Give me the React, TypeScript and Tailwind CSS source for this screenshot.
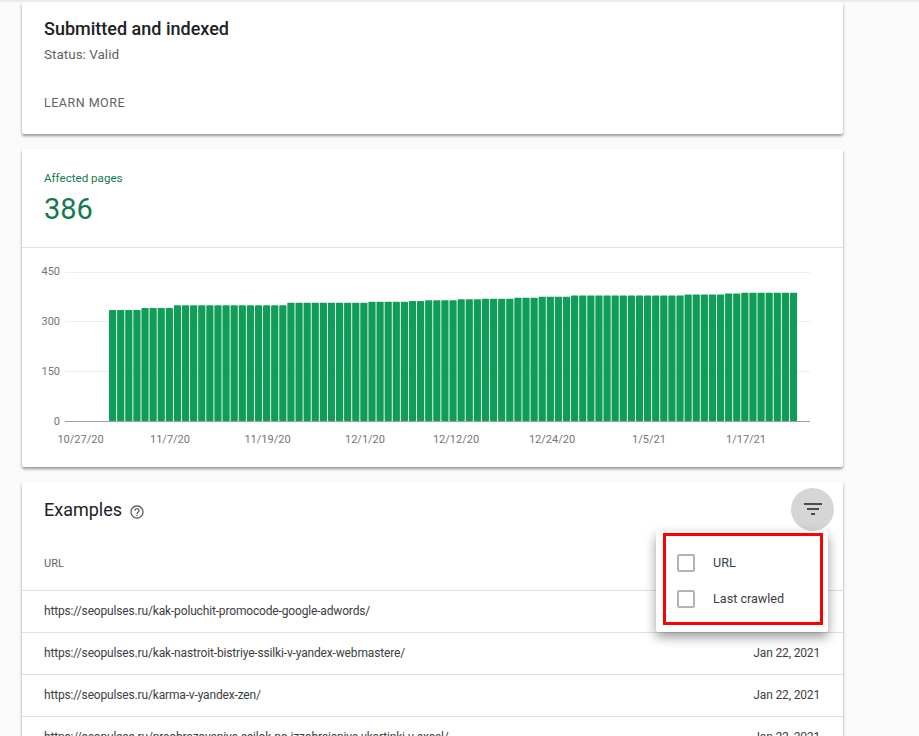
import React from "react";

// run lengths of [bar count, top y inside the chart svg]
const runs: [number, number][] = [
  [4, 310], [4, 308], [14, 305.3], [10, 302.7], [5, 301.7], [2, 301], [4, 300.3],
  [3, 299.3], [4, 298.7], [3, 297.7], [4, 296.7], [14, 295.6], [5, 294.4], [2, 293.4], [7, 292.7],
];

const tops: number[] = [];
runs.forEach(([n, y]) => {
  for (let i = 0; i < n; i++) tops.push(y);
});

const CHART_TOP = 248;
const BASE = 421;

const yTicks = [
  { label: "450", y: 272, textY: 275 },
  { label: "300", y: 321, textY: 324.5 },
  { label: "150", y: 371, textY: 374.5 },
  { label: "0", y: 421, textY: 424.5 },
];

const xTicks = [
  { label: "10/27/20", x: 80.5 },
  { label: "11/7/20", x: 170 },
  { label: "11/19/20", x: 267.5 },
  { label: "12/1/20", x: 365 },
  { label: "12/12/20", x: 456 },
  { label: "12/24/20", x: 552 },
  { label: "1/5/21", x: 649 },
  { label: "1/17/21", x: 746 },
];

const rows = [
  { url: "https://seopulses.ru/kak-poluchit-promocode-google-adwords/", date: "" },
  { url: "https://seopulses.ru/kak-nastroit-bistriye-ssilki-v-yandex-webmastere/", date: "Jan 22, 2021" },
  { url: "https://seopulses.ru/karma-v-yandex-zen/", date: "Jan 22, 2021" },
  { url: "https://seopulses.ru/preobrazovaniye-ssilok-no-izzobrajeniye-vkartinki-v-excel/", date: "Jan 22, 2021" },
];

const Chart = () => (
  <svg width="821" height="219" viewBox={`22 ${CHART_TOP} 821 219`} className="block">
    {yTicks.slice(0, 3).map((t) => (
      <line key={t.y} x1="65" x2="810" y1={t.y + 0.5} y2={t.y + 0.5} stroke="#eeeeee" />
    ))}
    {tops.map((top, i) => (
      <rect key={i} x={109 + i * 8.106} y={top} width="7.2" height={BASE - top} rx="0.8" fill="#0f9d58" />
    ))}
    <line x1="65" x2="810" y1={BASE + 0.5} y2={BASE + 0.5} stroke="#9e9e9e" />
    {yTicks.map((t) => (
      <text key={t.label} x="60" y={t.textY} textAnchor="end" fontSize="11" fill="#757575">
        {t.label}
      </text>
    ))}
    {xTicks.map((t) => (
      <text key={t.label} x={t.x} y="443" textAnchor="middle" fontSize="11" fill="#757575">
        {t.label}
      </text>
    ))}
  </svg>
);

const Checkbox = () => (
  <span className="block w-[18px] h-[18px] border-2 border-[#b3b3b3] rounded-[2px]" />
);

export default function App() {
  return (
    <div className="h-[736px] overflow-hidden bg-[#fafafa] font-['Roboto',sans-serif]">
      <div className="h-[2px] bg-[#ebebeb]" />
      <div className="w-[821px] ml-[22px] flex flex-col gap-[15px]">
        <section className="h-[132px] bg-white rounded-[2px] shadow-[0_2px_3px_rgba(0,0,0,0.4)] px-[22px] pt-[16px]">
          <h2 className="text-[18px] leading-[22px] font-medium text-[#202124]">Submitted and indexed</h2>
          <p className="mt-[5px] text-[13.5px] leading-[18px] text-[#5f6368]">Status: Valid</p>
          <p className="mt-[32px] text-[12.5px] leading-[16px] tracking-[0.5px] text-[#5f6368]">LEARN MORE</p>
        </section>

        <section className="bg-white rounded-[2px] shadow-[0_2px_3px_rgba(0,0,0,0.4)]">
          <div className="h-[99px] border-b border-[#e0e0e0] px-[22px] pt-[22px]">
            <p className="text-[11.6px] leading-[14px] text-[#137a4f]">Affected pages</p>
            <p className="mt-[6px] text-[29px] leading-[36px] text-[#137a4f]">386</p>
          </div>
          <Chart />
        </section>

        <section className="relative bg-white rounded-[2px] shadow-[0_2px_3px_rgba(0,0,0,0.4)]">
          <div className="h-[56px] flex items-center justify-between pl-[22px] pr-[9px]">
            <div className="flex items-center gap-[7px]">
              <h2 className="text-[18px] leading-[24px] text-[#202124]">Examples</h2>
              <svg width="16" height="16" viewBox="0 0 24 24" fill="#5f6368" className="mt-[3px]">
                <path d="M11 18h2v-2h-2v2zm1-16C6.48 2 2 6.48 2 12s4.48 10 10 10 10-4.48 10-10S17.52 2 12 2zm0 18c-4.41 0-8-3.59-8-8s3.59-8 8-8 8 3.59 8 8-3.59 8-8 8zm0-14c-2.21 0-4 1.79-4 4h2c0-1.1.9-2 2-2s2 .9 2 2c0 2-3 1.75-3 5h2c0-2.25 3-2.5 3-5 0-2.21-1.79-4-4-4z" />
              </svg>
            </div>
            <div className="w-[43px] h-[43px] mt-[-2px] rounded-full bg-[#d6d6d6] flex items-center justify-center">
              <svg width="24" height="24" viewBox="0 0 24 24" fill="#4a4d50">
                <path d="M10 18h4v-2h-4v2zM3 6v2h18V6H3zm3 7h12v-2H6v2z" />
              </svg>
            </div>
          </div>
          <div className="h-[53px] flex items-center border-b border-[#e0e0e0] px-[22px] pt-[1px] text-[11px] text-[#5f6368]">
            URL
          </div>
          {rows.map((r) => (
            <div key={r.url} className="h-[42px] flex items-center justify-between border-b border-[#e0e0e0] pl-[22px] pr-[23px] pb-[2px] text-[12px] tracking-[-0.16px] text-[#3c4043]">
              <span>{r.url}</span>
              <span>{r.date}</span>
            </div>
          ))}

          <div className="absolute left-[634px] top-[49px] w-[172px] h-[101px] bg-white rounded-[2px] shadow-[0_5px_12px_rgba(0,0,0,0.4)]">
            <div className="ml-[7px] mt-[2px] w-[160px] h-[92px] border-[3px] border-[#ff0000] flex flex-col pl-[11px] pt-[9px] text-[12.6px] text-[#3c4043]">
              <div className="h-[36px] flex items-center gap-[18px]">
                <Checkbox />
                <span>URL</span>
              </div>
              <div className="h-[36px] flex items-center gap-[18px]">
                <Checkbox />
                <span>Last crawled</span>
              </div>
            </div>
          </div>
        </section>
      </div>
    </div>
  );
}
